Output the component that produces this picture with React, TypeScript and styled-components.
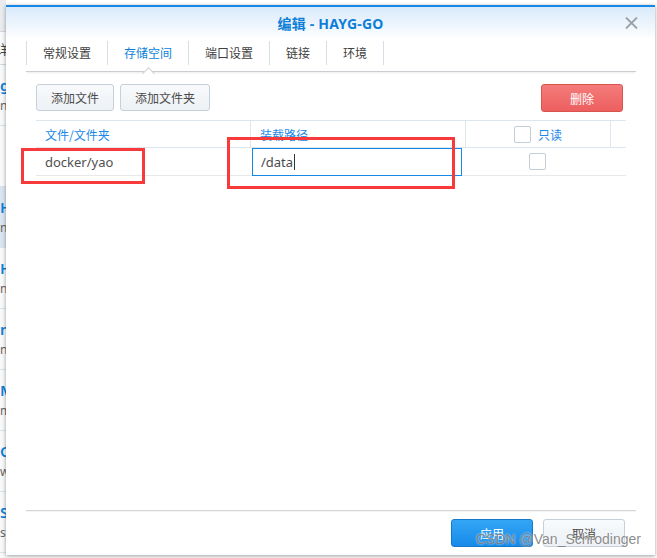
import styled, { createGlobalStyle } from "styled-components";

const GlobalStyle = createGlobalStyle`
  html, body {
    margin: 0;
    padding: 0;
    background: #ffffff;
  }
  body {
    font-family: "Noto Sans", "Noto Sans CJK SC", sans-serif;
    -webkit-font-smoothing: antialiased;
  }
`;

const sideItems = [
  { title: "Hayg", sub: "ngrok", active: true },
  { title: "HAYG", sub: "nginx", active: false },
  { title: "nas", sub: "nc", active: false },
  { title: "MySQL", sub: "mysql", active: false },
  { title: "Qbit", sub: "www", active: false },
  { title: "Syncthing", sub: "sync", active: false },
];

const App = () => {
  return (
    <Page>
      <GlobalStyle />
      <SideList>
        <SideHead />
        <SideTab>详情</SideTab>
        <SideItem>
          <SideTitle>gitea</SideTitle>
          <SideSub>nc</SideSub>
        </SideItem>
        <SideItem />
        {sideItems.map((item) => (
          <SideItem key={item.title} $active={item.active}>
            <SideTitle>{item.title}</SideTitle>
            <SideSub>{item.sub}</SideSub>
          </SideItem>
        ))}
      </SideList>

      <Dialog>
        <Header>
          <Title>编辑 - HAYG-GO</Title>
          <Close>
            <svg width="13" height="12" viewBox="0 0 13 12">
              <path
                d="M1 0.5 L12 11.5 M12 0.5 L1 11.5"
                stroke="#9aa0a6"
                strokeWidth="1.8"
                fill="none"
              />
            </svg>
          </Close>
        </Header>

        <TabBar>
          <Tab>常规设置</Tab>
          <Tab $active>存储空间</Tab>
          <Tab>端口设置</Tab>
          <Tab>链接</Tab>
          <Tab $last>环境</Tab>
        </TabBar>

        <Body>
          <Toolbar>
            <Button>添加文件</Button>
            <Button>添加文件夹</Button>
            <Spacer />
            <Button $variant="danger">删除</Button>
          </Toolbar>

          <Table>
            <HeadRow>
              <HeadCell $width={214}>文件/文件夹</HeadCell>
              <HeadCell $width={215}>装载路径</HeadCell>
              <HeadCell $width={145} $center>
                <Check />
                <span>只读</span>
              </HeadCell>
              <HeadCell $width={16} />
            </HeadRow>
            <Row>
              <Cell $width={214}>docker/yao</Cell>
              <Cell $width={215}>
                <PathInput>
                  /data<Caret />
                </PathInput>
              </Cell>
              <Cell $width={145} $center>
                <Check />
              </Cell>
            </Row>
          </Table>
        </Body>

        <Footer>
          <Button $variant="primary">应用</Button>
          <Button $variant="plain">取消</Button>
        </Footer>

        <Mark $left={15} $top={141} $w={124} $h={36} />
        <Mark $left={221} $top={130} $w={228} $h={52} />
        <Watermark>CSDN @Van_Schrodinger</Watermark>
      </Dialog>
    </Page>
  );
};

const Page = styled.div`
  display: flex;
  align-items: flex-start;
  width: 657px;
  height: 558px;
  overflow: hidden;
  background: #ffffff;
`;

const SideList = styled.div`
  width: 6px;
  flex: none;
  height: 558px;
  overflow: hidden;
  background: #f8f9fa;
  white-space: nowrap;
`;

const SideHead = styled.div`
  height: 32px;
  background: #e9ecef;
  border-bottom: 1px solid #d3d8dd;
  box-sizing: border-box;
`;

const SideTab = styled.div`
  height: 33px;
  line-height: 33px;
  font-family: "Noto Sans CJK SC", sans-serif;
  font-size: 13px;
  color: #444;
  margin-left: -4px;
  border-bottom: 1px solid #d3d8dd;
  box-sizing: border-box;
`;

const SideItem = styled.div<{ $active?: boolean }>`
  height: 61px;
  box-sizing: border-box;
  padding-top: 10px;
  border-bottom: 1px solid #dde2e7;
  background: ${({ $active }) => ($active ? "#d9e6f2" : "transparent")};
`;

const SideTitle = styled.div`
  font-size: 15px;
  line-height: 20px;
  font-weight: 600;
  color: #0e7fd9;
`;

const SideSub = styled.div`
  font-size: 12px;
  line-height: 22px;
  color: #666;
`;

const Dialog = styled.div`
  position: relative;
  flex: none;
  width: 649px;
  height: 550px;
  margin-top: 5px;
  box-sizing: border-box;
  border-top: 2px solid #1488e6;
  background: #ffffff;
  box-shadow: 0 1px 4px rgba(0, 0, 0, 0.4);
  display: flex;
  flex-direction: column;
`;

const Header = styled.div`
  height: 33px;
  flex: none;
  display: flex;
  align-items: center;
  justify-content: center;
  position: relative;
  padding-bottom: 1px;
  box-sizing: border-box;
  background: linear-gradient(#d9eafa, #ffffff);
`;

const Title = styled.div`
  font-size: 14px;
  font-weight: 700;
  color: #0e7fd9;
  font-family: "Noto Sans", "Noto Sans CJK SC", sans-serif;
  letter-spacing: 0.2px;
`;

const Close = styled.div`
  position: absolute;
  right: 17px;
  top: 10px;
  display: flex;
`;

const TabBar = styled.div`
  height: 32px;
  flex: none;
  box-sizing: border-box;
  margin: 0 19px 0 20px;
  padding-top: 1px;
  display: flex;
  align-items: flex-start;
  border-bottom: 1px solid #c9cdd1;
  box-shadow: 0 2px 2px -1px rgba(0, 0, 0, 0.08);
`;

const Tab = styled.div<{ $active?: boolean; $last?: boolean }>`
  position: relative;
  height: 24px;
  line-height: 24px;
  padding: 0 16px;
  font-family: "Noto Sans CJK SC", sans-serif;
  font-size: 12px;
  color: ${({ $active }) => ($active ? "#0e7fd9" : "#404040")};
  border-left: 1px solid #d6dee6;
  border-right: ${({ $last }) => ($last ? "1px solid #d6dee6" : "none")};

  &::after {
    content: "";
    display: ${({ $active }) => ($active ? "block" : "none")};
    position: absolute;
    left: calc(50% - 4px);
    top: 28px;
    width: 8px;
    height: 8px;
    background: #ffffff;
    border-top: 1px solid #c9cdd1;
    border-left: 1px solid #c9cdd1;
    transform: rotate(45deg);
  }
`;

const Body = styled.div`
  flex: 1;
  margin: 0 19px 0 20px;
  padding: 12px 10px 0 10px;
  display: flex;
  flex-direction: column;
`;

const Toolbar = styled.div`
  display: flex;
  gap: 6px;
  padding-right: 3px;
  height: 27px;
  margin-bottom: 9px;
`;

const Spacer = styled.div`
  flex: 1;
`;

const variants = {
  plain: {
    bg: "linear-gradient(#f8fafc, #edf1f5)",
    border: "#c5d0da",
    color: "#4a4a4a",
  },
  danger: {
    bg: "linear-gradient(#f57b7b, #ec5f5f)",
    border: "#d9534f",
    color: "#ffffff",
  },
  primary: {
    bg: "linear-gradient(#34a6f6, #168ae9)",
    border: "#1579c9",
    color: "#ffffff",
  },
};

const Button = styled.div<{ $variant?: keyof typeof variants }>`
  box-sizing: border-box;
  height: ${({ $variant }) => ($variant ? "28px" : "27px")};
  min-width: ${({ $variant }) => ($variant ? "82px" : "0")};
  padding: 0 14px;
  display: flex;
  align-items: center;
  justify-content: center;
  font-family: "Noto Sans CJK SC", sans-serif;
  font-size: 12px;
  border-radius: 3px;
  border: 1px solid ${({ $variant }) => variants[$variant ?? "plain"].border};
  background: ${({ $variant }) => variants[$variant ?? "plain"].bg};
  color: ${({ $variant }) => variants[$variant ?? "plain"].color};
`;

const Table = styled.div`
  width: 590px;
  display: flex;
  flex-direction: column;
`;

const HeadRow = styled.div`
  display: flex;
  height: 28px;
  box-sizing: border-box;
  border-top: 1px solid #dde5ed;
  border-bottom: 1px solid #dde5ed;
`;

const HeadCell = styled.div<{ $width: number; $center?: boolean }>`
  width: ${({ $width }) => $width}px;
  box-sizing: border-box;
  display: flex;
  align-items: center;
  justify-content: ${({ $center }) => ($center ? "center" : "flex-start")};
  gap: 7px;
  padding-left: ${({ $center }) => ($center ? "0" : "9px")};
  font-family: "Noto Sans CJK SC", sans-serif;
  font-size: 12px;
  color: #1a88e8;
  & + & {
    border-left: 1px solid #dde5ed;
  }
`;

const Row = styled.div`
  display: flex;
  height: 28px;
  box-sizing: border-box;
  border-bottom: 1px solid #e6e9ec;
`;

const Cell = styled.div<{ $width: number; $center?: boolean }>`
  width: ${({ $width }) => $width}px;
  box-sizing: border-box;
  display: flex;
  align-items: center;
  justify-content: ${({ $center }) => ($center ? "center" : "flex-start")};
  padding-left: ${({ $center }) => ($center ? "0" : "9px")};
  font-size: 13px;
  color: #505050;
  &:nth-child(2) {
    padding-left: 2px;
    align-items: flex-start;
  }
`;

const PathInput = styled.div`
  width: 210px;
  height: 28px;
  box-sizing: border-box;
  border: 1px solid #1588e6;
  background: #ffffff;
  padding-left: 8px;
  display: flex;
  align-items: center;
  font-size: 13px;
  color: #4a4a4a;
`;

const Caret = styled.span`
  display: inline-block;
  width: 1px;
  height: 16px;
  margin-left: 1px;
  background: #333;
`;

const Check = styled.div`
  width: 17px;
  height: 17px;
  box-sizing: border-box;
  border: 1px solid #c3cdd7;
  border-radius: 2px;
  background: #ffffff;
`;

const Footer = styled.div`
  flex: none;
  margin: 0 19px 0 20px;
  padding: 8px 11px 8px 0;
  border-top: 1px solid #d3d6d9;
  box-shadow: inset 0 1px 1px rgba(0, 0, 0, 0.05);
  display: flex;
  justify-content: flex-end;
  gap: 10px;
`;

const Mark = styled.div<{ $left: number; $top: number; $w: number; $h: number }>`
  position: absolute;
  left: ${({ $left }) => $left}px;
  top: ${({ $top }) => $top}px;
  width: ${({ $w }) => $w}px;
  height: ${({ $h }) => $h}px;
  box-sizing: border-box;
  border: 3px solid #f83a3a;
  pointer-events: none;
`;

const Watermark = styled.div`
  position: absolute;
  left: 470px;
  top: 524px;
  font-family: "Liberation Sans", Arial, sans-serif;
  font-size: 14px;
  color: rgba(110, 110, 110, 0.8);
  text-shadow: 0 0 2px rgba(255, 255, 255, 0.9);
  white-space: nowrap;
  pointer-events: none;
`;

export default App;
